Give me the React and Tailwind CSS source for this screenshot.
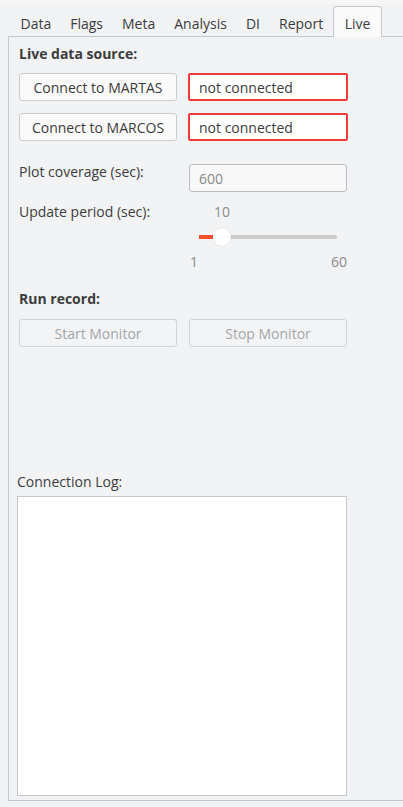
import React, { useState } from 'react';

const tabs = ['Data', 'Flags', 'Meta', 'Analysis', 'DI', 'Report', 'Live'];

const App = () => {
  const [active] = useState('Live');
  const [period] = useState(10);

  // slider maps 1..60 onto the track
  const pct = ((period - 1) / 59) * 100;

  return (
    <div
      className="w-[403px] h-[807px] bg-[#f2f3f5] text-[#3c3c3c] text-[14px] overflow-hidden"
      style={{ fontFamily: '"Open Sans", "Noto Sans", sans-serif' }}
    >
      {/* Tab bar */}
      <div className="h-[36px] flex items-end pl-[11px] bg-[#f2f3f5] border-t-[5px] border-[#f6f6f7]">
        {tabs.map((t) =>
          t === active ? (
            <div
              key={t}
              className="relative top-[1px] h-[31px] px-[11px] pt-[3px] flex items-center bg-[#fafafa] border border-b-0 border-[#c4c7cc] rounded-t-[4px] text-[#3c3c3c]"
            >
              {t}
            </div>
          ) : (
            <div key={t} className="h-[30px] pt-[5px] px-[9.5px] flex items-center text-[#3c3c3c]">
              {t}
            </div>
          )
        )}
      </div>

      {/* Panel */}
      <div className="ml-[8px] h-[765px] border-l border-t border-b border-[#c4c7cc] flex flex-col pl-[10px] pr-[54px]">
        <div className="font-bold mt-[7px] h-[20px] leading-[20px]">Live data source:</div>

        <div className="grid grid-cols-[158px_160px] gap-x-[11px] gap-y-[12px] mt-[9px]">
          <button className="h-[28px] bg-[#fafafa] border border-[#c8cbd0] rounded-[3px] text-[#3c3c3c]">
            Connect to MARTAS
          </button>
          <div className="h-[28px] bg-white border-2 border-[#ef3b3b] rounded-[2px] pl-[9px] flex items-center">
            not connected
          </div>
          <button className="h-[28px] bg-[#fafafa] border border-[#c8cbd0] rounded-[3px] text-[#3c3c3c]">
            Connect to MARCOS
          </button>
          <div className="h-[28px] bg-white border-2 border-[#ef3b3b] rounded-[2px] pl-[9px] flex items-center">
            not connected
          </div>
        </div>

        <div className="grid grid-cols-[170px_158px] mt-[23px]">
          <div className="h-[20px] leading-[20px] -mt-[2px]">Plot coverage (sec):</div>
          <div className="h-[28px] bg-[#f8f8f8] border border-[#b9bcc0] rounded-[3px] pl-[9px] flex items-center text-[#8a8a8a]">
            600
          </div>
        </div>

        <div className="grid grid-cols-[170px_158px] mt-[10px]">
          <div className="h-[20px] leading-[20px]">Update period (sec):</div>
          <div>
            <div className="relative h-[50px] ml-[10px] mr-[10px]">
              <span
                className="absolute -translate-x-1/2 top-0 leading-[20px] text-[#8a8a8a]"
                style={{ left: `calc(${pct}% + 2px)` }}
              >
                {period}
              </span>
              <div className="absolute left-0 right-0 top-[33px] h-[4px] rounded-full bg-[#cdcdcd]" />
              <div className="absolute left-0 top-[33px] h-[4px] w-[14px] bg-[#f0502a]" />
              <div
                className="absolute top-[26px] w-[18px] h-[18px] -ml-[9px] rounded-full bg-white shadow-[0_0_1px_rgba(0,0,0,0.2)]"
                style={{ left: `calc(${pct}% + 2px)` }}
              />
            </div>
            <div className="flex justify-between h-[20px] leading-[20px] text-[#8a8a8a]">
              <span className="ml-[1px]">1</span>
              <span>60</span>
            </div>
          </div>
        </div>

        <div className="font-bold mt-[17px] h-[20px] leading-[20px]">Run record:</div>

        <div className="grid grid-cols-[158px_158px] gap-x-[12px] mt-[10px]">
          <button className="h-[28px] bg-[#f3f4f6] border border-[#d0d3d7] rounded-[3px] text-[#a4a6a9]">
            Start Monitor
          </button>
          <button className="h-[28px] bg-[#f3f4f6] border border-[#d0d3d7] rounded-[3px] text-[#a4a6a9]">
            Stop Monitor
          </button>
        </div>

        <div className="-ml-[2px] mt-[125px] h-[20px] leading-[20px]">Connection Log:</div>
        <div className="-ml-[2px] mt-[4px] w-[330px] h-[300px] bg-white border border-[#c4c7cc]" />
      </div>
    </div>
  );
};

export default App;
